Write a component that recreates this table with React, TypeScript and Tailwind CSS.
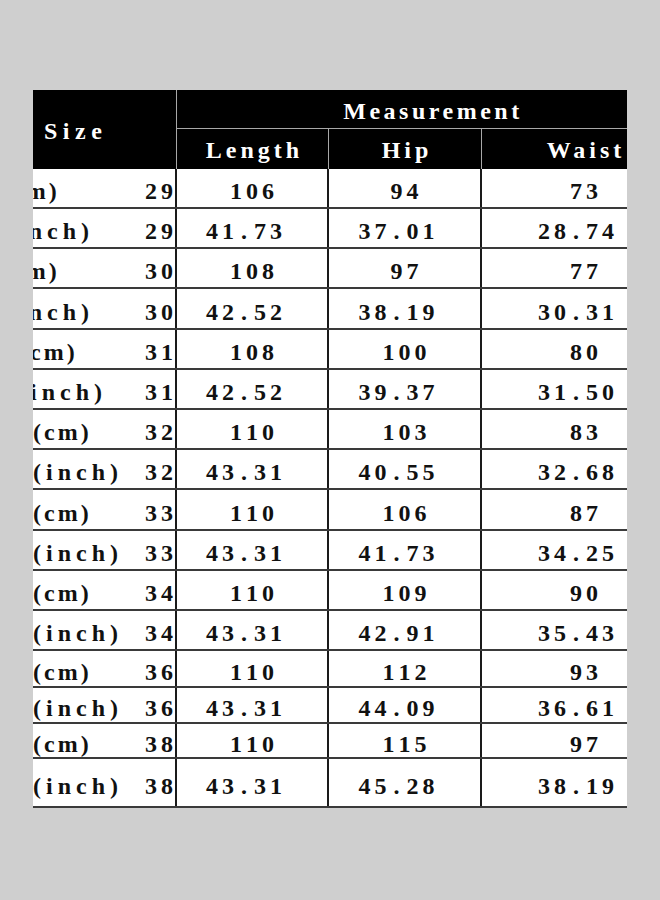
import React from "react"

type Row = {
	label: string
	shift: string
	size: string
	length: string
	hip: string
	waist: string
	h: string
}

const rows: Row[] = [
	{ label: "(cm)", shift: "-ml-[32px]", size: "29", length: "106", hip: "94", waist: "73", h: "h-[40px]" },
	{ label: "(inch)", shift: "-ml-[29px]", size: "29", length: "41.73", hip: "37.01", waist: "28.74", h: "h-[40px]" },
	{ label: "(cm)", shift: "-ml-[32px]", size: "30", length: "108", hip: "97", waist: "77", h: "h-[40px]" },
	{ label: "(inch)", shift: "-ml-[29px]", size: "30", length: "42.52", hip: "38.19", waist: "30.31", h: "h-[41px]" },
	{ label: "(cm)", shift: "-ml-[14px]", size: "31", length: "108", hip: "100", waist: "80", h: "h-[40px]" },
	{ label: "(inch)", shift: "-ml-[16px]", size: "31", length: "42.52", hip: "39.37", waist: "31.50", h: "h-[40px]" },
	{ label: "(cm)", shift: "ml-0", size: "32", length: "110", hip: "103", waist: "83", h: "h-[40px]" },
	{ label: "(inch)", shift: "ml-0", size: "32", length: "43.31", hip: "40.55", waist: "32.68", h: "h-[40px]" },
	{ label: "(cm)", shift: "ml-0", size: "33", length: "110", hip: "106", waist: "87", h: "h-[41px]" },
	{ label: "(inch)", shift: "ml-0", size: "33", length: "43.31", hip: "41.73", waist: "34.25", h: "h-[40px]" },
	{ label: "(cm)", shift: "ml-0", size: "34", length: "110", hip: "109", waist: "90", h: "h-[40px]" },
	{ label: "(inch)", shift: "ml-0", size: "34", length: "43.31", hip: "42.91", waist: "35.43", h: "h-[40px]" },
	{ label: "(cm)", shift: "ml-0", size: "36", length: "110", hip: "112", waist: "93", h: "h-[37px]" },
	{ label: "(inch)", shift: "ml-0", size: "36", length: "43.31", hip: "44.09", waist: "36.61", h: "h-[36px]" },
	{ label: "(cm)", shift: "ml-0", size: "38", length: "110", hip: "115", waist: "97", h: "h-[35px]" },
	{ label: "(inch)", shift: "ml-0", size: "38", length: "43.31", hip: "45.28", waist: "38.19", h: "h-[49px]" },
]

// digits sit in fixed half-width cells, like the old SimSun sheet
function Num({ value }: { value: string }) {
	return (
		<span className={`${value.includes(".") ? "pr-[16px]" : ""} inline-flex shrink-0`}>
			{value.split("").map((ch, i) => (
				<span key={i} className="inline-block w-[16px] text-center">
					{ch}
				</span>
			))}
		</span>
	)
}

export default function App() {
	return (
		<div className="h-[900px] w-[660px] bg-[#cfcfcf] pl-[33px] pt-[90px] font-['Liberation_Serif',serif] font-bold">
			<div className="w-[594px] overflow-hidden bg-white">
				<div className="w-[653px]">
					{/* header */}
					<div className="flex h-[79px] bg-black text-[24px] leading-none tracking-[4px] text-white">
						<div className="flex w-[144px] items-center border-r border-[#a8a8a8] pl-[11px] pt-[3px] tracking-[5.5px]">
							Size
						</div>
						<div className="flex flex-1 flex-col">
							<div className="flex h-[39px] items-center justify-center border-b border-[#a8a8a8] pl-[3px] pt-[4px] tracking-[3.5px]">
								Measurement
							</div>
							<div className="flex flex-1">
								<div className="flex w-[152px] items-center justify-center border-r border-[#a8a8a8] pl-[4px] pt-[2px]">
									Length
								</div>
								<div className="flex w-[153px] items-center justify-center border-r border-[#a8a8a8] pl-[4px] pt-[2px]">
									Hip
								</div>
								<div className="flex flex-1 items-center justify-center pl-[4px] pt-[2px]">
									Waist
								</div>
							</div>
						</div>
					</div>

					{/* body */}
					{rows.map((r, i) => (
						<div
							key={i}
							className={`${r.h} flex border-b-2 border-[#3a3a3a] text-[24px] leading-none text-[#111]`}>
							<div className="flex w-[144px] items-center justify-between overflow-hidden border-r-2 border-[#1a1a1a] pt-[6px]">
								<span
									className={`${r.shift} ${r.label === "(cm)" ? "tracking-[3px]" : "tracking-[5px]"} shrink-0 whitespace-nowrap`}>
									{r.label}
								</span>
								<Num value={r.size} />
							</div>
							<div className="flex w-[152px] items-center justify-center border-r-2 border-[#1a1a1a] pt-[6px]">
								<Num value={r.length} />
							</div>
							<div className="flex w-[153px] items-center justify-center border-r-2 border-[#1a1a1a] pt-[6px]">
								<Num value={r.hip} />
							</div>
							<div className="flex flex-1 items-center justify-center pt-[6px]">
								<Num value={r.waist} />
							</div>
						</div>
					))}
				</div>
			</div>
		</div>
	)
}
